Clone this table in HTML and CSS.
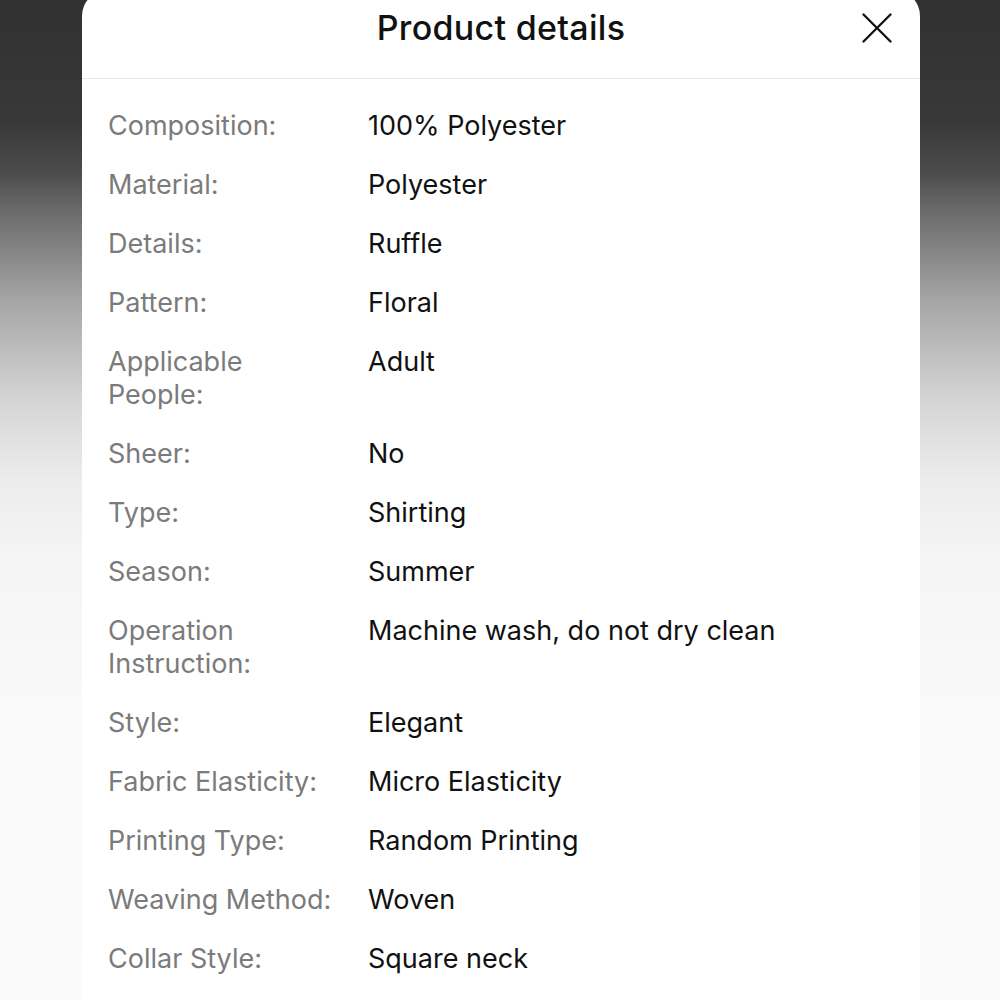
FILE: index.html
```html
<!DOCTYPE html>
<html lang="en">
<head>
<meta charset="utf-8">
<title>Product details</title>
<link rel="stylesheet" href="styles.css">
</head>
<body>
<div class="sheet">
  <header class="sheet-header">
    <h1 class="sheet-title">Product details</h1>
    <button class="close-btn" aria-label="Close">
      <svg width="30" height="30" viewBox="0 0 30 30"><path d="M1.5 1.5 L28.5 28.5 M28.5 1.5 L1.5 28.5" stroke="#111" stroke-width="2.3" stroke-linecap="round" fill="none"/></svg>
    </button>
  </header>
  <dl class="details">
    <div class="row"><dt>Composition:</dt><dd>100% Polyester</dd></div>
    <div class="row"><dt>Material:</dt><dd>Polyester</dd></div>
    <div class="row"><dt>Details:</dt><dd>Ruffle</dd></div>
    <div class="row"><dt>Pattern:</dt><dd>Floral</dd></div>
    <div class="row"><dt>Applicable People:</dt><dd>Adult</dd></div>
    <div class="row"><dt>Sheer:</dt><dd>No</dd></div>
    <div class="row"><dt>Type:</dt><dd>Shirting</dd></div>
    <div class="row"><dt>Season:</dt><dd>Summer</dd></div>
    <div class="row"><dt>Operation Instruction:</dt><dd>Machine wash, do not dry clean</dd></div>
    <div class="row"><dt>Style:</dt><dd>Elegant</dd></div>
    <div class="row"><dt>Fabric Elasticity:</dt><dd>Micro Elasticity</dd></div>
    <div class="row"><dt>Printing Type:</dt><dd>Random Printing</dd></div>
    <div class="row"><dt>Weaving Method:</dt><dd>Woven</dd></div>
    <div class="row"><dt>Collar Style:</dt><dd>Square neck</dd></div>
  </dl>
</div>
</body>
</html>
```
FILE: styles.css
```css
* { box-sizing: border-box; }
html, body { margin: 0; padding: 0; }
body {
  width: 1000px;
  height: 1000px;
  overflow: hidden;
  font-family: Inter, "Noto Sans", "Liberation Sans", sans-serif;
  background: linear-gradient(to bottom,
    #313131 0px, #383838 120px, #4a4a4a 170px, #6a6a6a 210px,
    #a5a5a5 300px, #d5d5d5 400px, #ececec 480px, #f5f5f5 560px,
    #f9f9f9 700px, #fafafa 1000px);
}
.sheet {
  margin: -10px 0 0 82px;
  width: 838px;
  height: 1010px;
  background: #fff;
  border-radius: 26px 26px 0 0;
}
.sheet-header {
  position: relative;
  height: 89px;
  padding-top: 18px;
  border-bottom: 1px solid #e6e6e6;
  text-align: center;
}
.sheet-title {
  margin: 0;
  font-size: 34px;
  line-height: 40px;
  font-weight: 500;
  letter-spacing: 0.3px;
  color: #111;
}
.close-btn {
  position: absolute;
  top: 23px;
  right: 28px;
  width: 30px;
  height: 30px;
  padding: 0;
  border: 0;
  background: none;
}
.close-btn svg { display: block; }
.details {
  margin: 0;
  padding: 30px 26px 0 26px;
  display: flex;
  flex-direction: column;
  gap: 26px;
}
.row {
  display: flex;
  gap: 32px;
  font-size: 27px;
  line-height: 33px;
}
.row dt {
  width: 228px;
  flex: none;
  color: #7b7b7b;
}
.row dd {
  margin: 0;
  color: #111;
}
```
